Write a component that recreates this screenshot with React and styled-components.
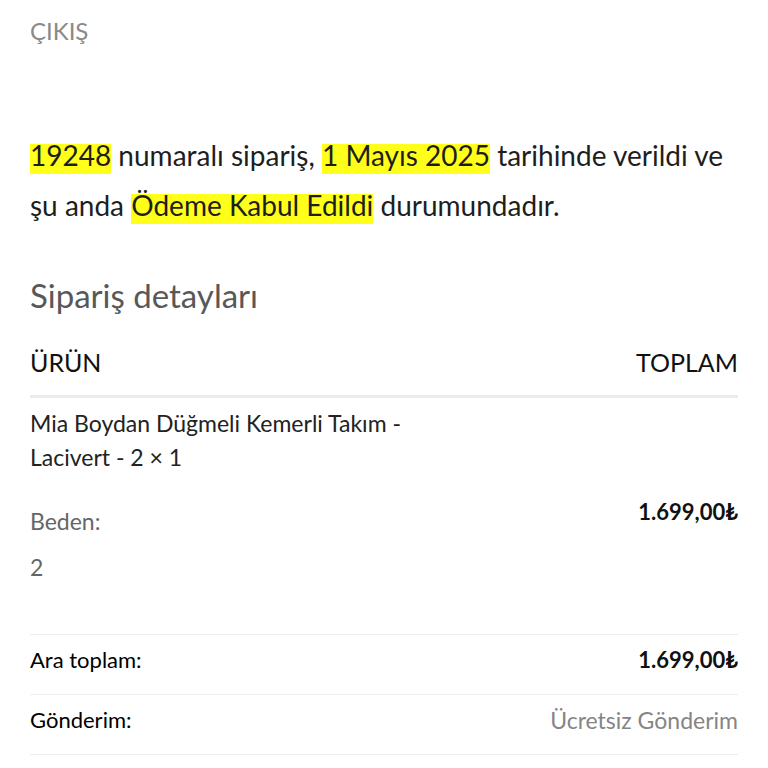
import React from "react";
import styled, { createGlobalStyle } from "styled-components";

const GlobalStyle = createGlobalStyle`
  html, body {
    margin: 0;
    padding: 0;
    background: #fff;
  }
  body {
    font-family: Lato, "Noto Sans", sans-serif;
    color: #222;
  }
`;

const Page = styled.div`
  padding: 0 30px;
  width: 768px;
  box-sizing: border-box;
`;

const ExitLink = styled.a`
  display: block;
  padding-top: 16px;
  font-size: 24px;
  line-height: 30px;
  color: #8a8a8a;
  text-decoration: none;
`;

const Notice = styled.p`
  margin: 84px 0 0;
  font-size: 28px;
  line-height: 50px;
  color: #1e1e1e;
`;

const Mark = styled.mark`
  background: linear-gradient(transparent 6px, #ffff1a 6px);
  color: #1e1e1e;
  padding: 0 0 2px;
`;

const Heading = styled.h2`
  margin: 45px 0 0;
  font-weight: 400;
  font-size: 33px;
  line-height: 40px;
  color: #585858;
`;

const Table = styled.div`
  margin-top: 32px;
`;

const HeadRow = styled.div`
  display: flex;
  justify-content: space-between;
  padding-bottom: 18px;
  border-bottom: 3px solid #ececec;
  font-size: 25px;
  line-height: 30px;
  text-transform: uppercase;
  color: #111;
`;

const ItemRow = styled.div`
  display: flex;
  justify-content: space-between;
  padding: 8px 0 53px;
  border-bottom: 1px solid #eeeeee;
`;

const ItemInfo = styled.div`
  flex: 0 0 60%;
`;

const ItemName = styled.div`
  font-size: 23px;
  line-height: 34px;
  color: #222;
`;

const MetaLabel = styled.div`
  margin-top: 33px;
  font-size: 23px;
  line-height: 28px;
  color: #666;
`;

const MetaValue = styled.div`
  margin-top: 18px;
  font-size: 23px;
  line-height: 28px;
  color: #666;
`;

const Price = styled.div`
  margin-top: 92px;
  font-size: 22px;
  font-weight: 700;
  line-height: 28px;
  color: #111;
`;

const TotalRow = styled.div`
  display: flex;
  justify-content: space-between;
  align-items: center;
  height: 60px;
  padding-bottom: 9px;
  box-sizing: border-box;
  border-bottom: 1px solid #eeeeee;
  font-size: 22px;
  line-height: 28px;
  color: #000;
`;

const TotalLabel = styled.span`
  font-weight: 400;
`;

const TotalValue = styled.span`
  font-size: ${(p) => (p.$muted ? "23px" : "22px")};
  font-weight: ${(p) => (p.$muted ? 400 : 700)};
  color: ${(p) => (p.$muted ? "#858585" : "#111")};
`;

export default function App() {
  return (
    <Page>
      <GlobalStyle />
      <ExitLink href="#">ÇIKIŞ</ExitLink>
      <Notice>
        <Mark>19248</Mark> numaralı sipariş, <Mark>1 Mayıs 2025</Mark> tarihinde
        verildi ve şu anda <Mark>Ödeme Kabul Edildi</Mark> durumundadır.
      </Notice>
      <Heading>Sipariş detayları</Heading>
      <Table>
        <HeadRow>
          <span>Ürün</span>
          <span>Toplam</span>
        </HeadRow>
        <ItemRow>
          <ItemInfo>
            <ItemName>Mia Boydan Düğmeli Kemerli Takım - Lacivert - 2 × 1</ItemName>
            <MetaLabel>Beden:</MetaLabel>
            <MetaValue>2</MetaValue>
          </ItemInfo>
          <Price>1.699,00₺</Price>
        </ItemRow>
        <TotalRow>
          <TotalLabel>Ara toplam:</TotalLabel>
          <TotalValue>1.699,00₺</TotalValue>
        </TotalRow>
        <TotalRow>
          <TotalLabel>Gönderim:</TotalLabel>
          <TotalValue $muted>Ücretsiz Gönderim</TotalValue>
        </TotalRow>
        <TotalRow>
          <TotalLabel>Ödeme yöntemi:</TotalLabel>
          <TotalValue $muted>Kredi Kartı</TotalValue>
        </TotalRow>
      </Table>
    </Page>
  );
}
